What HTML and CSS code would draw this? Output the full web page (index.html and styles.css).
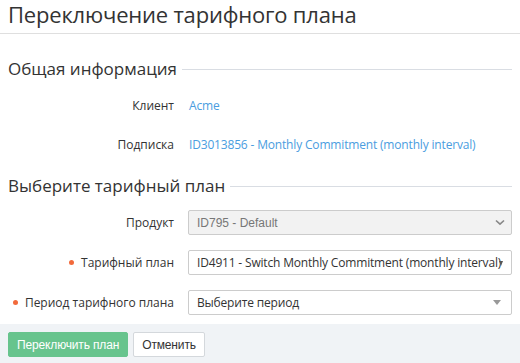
FILE: index.html
```html
<!DOCTYPE html>
<html lang="ru">
<head>
<meta charset="UTF-8">
<meta name="viewport" content="width=device-width, initial-scale=1.0">
<title>Переключение тарифного плана</title>
<link rel="stylesheet" href="styles.css">
</head>
<body>
<div class="header">
    <h1 class="title">Переключение тарифного плана</h1>
</div>
<div class="content">
    <div class="legend"><span>Общая информация</span></div>
    <div class="row info">
        <div class="label">Клиент</div>
        <div class="value"><a href="#">Acme</a></div>
    </div>
    <div class="row info">
        <div class="label">Подписка</div>
        <div class="value"><a href="#">ID3013856 - Monthly Commitment (monthly interval)</a></div>
    </div>

    <div class="legend second"><span>Выберите тарифный план</span></div>
    <div class="row field">
        <div class="label">Продукт</div>
        <div class="control disabled">
            <span class="text">ID795 - Default</span>
            <svg class="chevron" width="10" height="7" viewBox="0 0 10 7"><path d="M1 1.5 L5 5.2 L9 1.5" fill="none" stroke="#888" stroke-width="1.6"/></svg>
        </div>
    </div>
    <div class="row field">
        <div class="label"><span class="req"></span>Тарифный план</div>
        <div class="control">
            <span class="text plan">ID4911 - Switch Monthly Commitment (monthly interval)</span>
            <span class="tri small"></span>
        </div>
    </div>
    <div class="row field">
        <div class="label"><span class="req"></span>Период тарифного плана</div>
        <div class="control">
            <span class="text plan">Выберите период</span>
            <span class="tri"></span>
        </div>
    </div>
</div>
<div class="footer">
    <button class="btn primary">Переключить план</button>
    <button class="btn">Отменить</button>
</div>
</body>
</html>
```

FILE: styles.css
```css
body {
    margin: 0;
    font-family: "Open Sans", "Noto Sans", sans-serif;
    color: #333;
    background-color: #fff;
}

.header {
    height: 33px;
    border-bottom: 1px solid #dfdfdf;
    padding: 0 8px;
}

.title {
    margin: 0;
    font-size: 22px;
    font-weight: 400;
    line-height: 28px;
    letter-spacing: -0.2px;
    color: #333;
}

.content {
    padding: 0 8px;
}

.legend {
    display: flex;
    align-items: center;
    margin-top: 22px;
    height: 24px;
    font-size: 17px;
    color: #333;
}

.legend::after {
    content: "";
    flex: 1;
    height: 1px;
    background-color: #d9dde3;
    margin-left: 5px;
    margin-top: 2px;
}

.legend.second {
    margin-top: 9px;
    margin-bottom: 13px;
}

.row {
    display: flex;
    align-items: center;
}

.row.info {
    height: 39px;
}

.legend + .row.info {
    margin-top: 6px;
}

.label {
    width: 166px;
    flex: none;
    text-align: right;
    font-size: 12px;
    color: #333;
    display: flex;
    justify-content: flex-end;
    align-items: center;
}

.value {
    margin-left: 15px;
    font-size: 12px;
    letter-spacing: -0.17px;
}

.value a {
    color: #4a9de0;
    text-decoration: none;
}

.row.field {
    margin-bottom: 15px;
}

.row.field:last-child {
    margin-bottom: 0;
}

.control {
    margin-left: 14px;
    flex: 1;
    height: 25px;
    box-sizing: border-box;
    border: 1px solid #ccc;
    border-radius: 2px;
    background-color: #fff;
    display: flex;
    align-items: center;
    padding: 0 8px 0 8px;
    position: relative;
    overflow: hidden;
}

.control.disabled {
    background-color: #f2f2f2;
}

.text {
    flex: 1;
    white-space: nowrap;
    overflow: hidden;
    font-family: "Liberation Sans", Arial, sans-serif;
    font-size: 12px;
    color: #777;
}

.text.plan {
    font-family: "Open Sans", "Noto Sans", sans-serif;
    font-size: 12px;
    letter-spacing: -0.18px;
    color: #333;
}

.chevron {
    flex: none;
    margin-right: -2px;
}

.tri {
    flex: none;
    width: 0;
    height: 0;
    border-left: 4px solid transparent;
    border-right: 4px solid transparent;
    border-top: 5px solid #999;
    margin-right: 2px;
}

.tri.small {
    position: absolute;
    right: 6px;
    top: 10px;
    border-left-width: 2px;
    border-right-width: 2px;
    border-top-color: #555;
}

.req {
    width: 5px;
    height: 5px;
    border-radius: 50%;
    background-color: #f26a3b;
    margin-right: 7px;
}

.footer {
    margin-top: 9px;
    background-color: #f0f3f6;
    padding: 8px 8px 7px;
    display: flex;
    gap: 5px;
}

.btn {
    height: 25px;
    box-sizing: border-box;
    border: 1px solid #d4d8dc;
    border-radius: 2px;
    background-color: #fff;
    font-family: "Liberation Sans", Arial, sans-serif;
    font-size: 12px;
    letter-spacing: -0.15px;
    color: #333;
    padding: 0 8px;
    white-space: nowrap;
}

.btn.primary {
    background-color: #67c48d;
    border-color: #67c48d;
    color: #fff;
}
```
